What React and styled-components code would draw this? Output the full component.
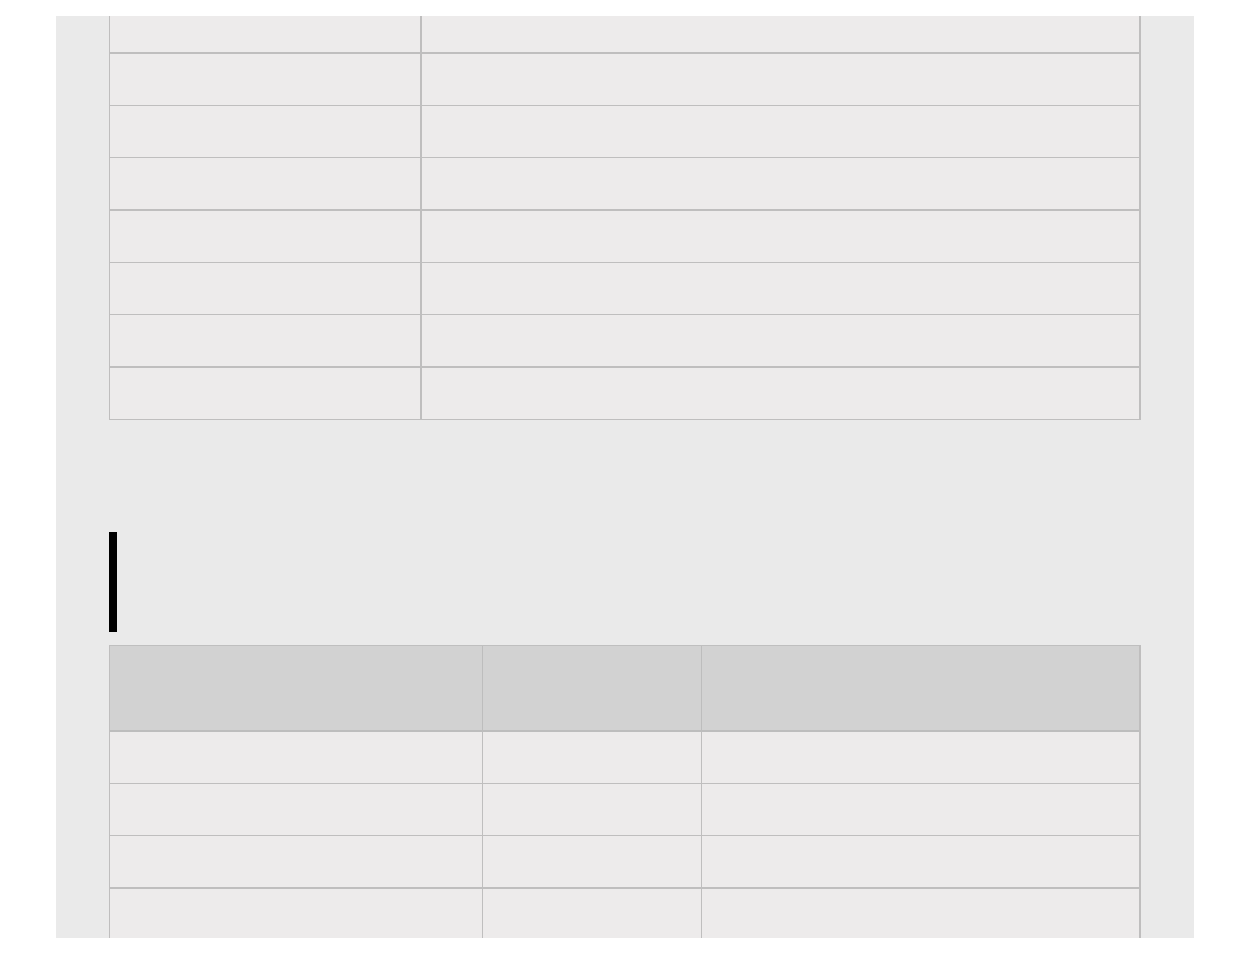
import React from "react"
import styled, { createGlobalStyle } from "styled-components"

const GlobalStyle = createGlobalStyle`
  * {
    box-sizing: border-box;
  }

  html,
  body {
    margin: 0;
    background: #ffffff;
    font-family: "Liberation Sans", Arial, sans-serif;
  }
`

const Page = styled.div`
  padding: 16px 41px 0 56px;
  height: 954px;
  overflow: hidden;
`

const Panel = styled.div`
  width: 1138px;
  height: 922px;
  overflow: hidden;
  background: #eaeaea;
  padding: 0 53px;
`

const Table = styled.div`
  width: 1032px;
  border-left: 1px solid #bfbebe;
  border-right: 2px solid #bfbebe;
  border-top: ${({ top }) => (top ? "1px solid #bfbfbf" : "none")};
`

const Row = styled.div`
  box-sizing: content-box;
  display: grid;
  grid-template-columns: ${({ columns }) => columns};
  height: ${({ height }) => height || 51}px;
  border-bottom: ${({ thick }) => (thick ? 2 : 1)}px solid #bfbebe;
  background: #edebeb;
`

const HeaderRow = styled(Row)`
  background: #d2d2d2;
  border-bottom: 2px solid #bdbdbd;
`

const Cell = styled.div`
  border-right: ${({ divider }) => divider || 0}px solid #bfbebe;

  &:last-child {
    border-right: none;
  }
`

const HeaderCell = styled(Cell)`
  border-right-color: #bdbdbd;
`

const SectionTitle = styled.h2`
  margin: 112px 0 13px;
  height: 100px;
  border-left: 8px solid #000000;
  font-size: 24px;
`

const specRows = [
  { height: 36, thick: true },
  {},
  {},
  { thick: true },
  {},
  {},
  { thick: true },
  {},
]

const priceRows = [{}, {}, { thick: true }, {}]

const SPEC_COLUMNS = "312px 1fr"
const PRICE_COLUMNS = "373px 219px 1fr"

export default function App() {
  return (
    <>
      <GlobalStyle />
      <Page>
        <Panel>
          <Table>
            {specRows.map((row, i) => (
              <Row
                key={i}
                columns={SPEC_COLUMNS}
                height={row.height}
                thick={row.thick}
              >
                <Cell divider={2} />
                <Cell />
              </Row>
            ))}
          </Table>

          <SectionTitle />

          <Table top>
            <HeaderRow columns={PRICE_COLUMNS} height={84}>
              <HeaderCell divider={1} />
              <HeaderCell divider={1} />
              <HeaderCell />
            </HeaderRow>
            {priceRows.map((row, i) => (
              <Row key={i} columns={PRICE_COLUMNS} thick={row.thick}>
                <Cell divider={1} />
                <Cell divider={1} />
                <Cell />
              </Row>
            ))}
          </Table>
        </Panel>
      </Page>
    </>
  )
}
